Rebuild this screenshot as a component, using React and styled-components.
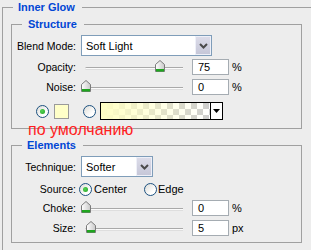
import React from "react";
import styled, { createGlobalStyle, css } from "styled-components";

const GlobalStyle = createGlobalStyle`
  html, body {
    margin: 0;
    padding: 0;
    background: #ededed;
    overflow: hidden;
  }
  body {
    font-family: "Liberation Sans", Arial, sans-serif;
    font-size: 10.5px;
    color: #000;
  }
`;

const Page = styled.div`
  position: relative;
  width: 311px;
  height: 250px;
  overflow: hidden;
`;

const Group = styled.fieldset`
  box-sizing: border-box;
  min-width: 0;
  margin: ${(p) => p.$margin || 0};
  padding: ${(p) => p.$padding || 0};
  width: ${(p) => p.$width || "auto"};
  border: 1px solid #a0a0a0;
  ${(p) =>
    p.$open &&
    css`
      border-right: none;
      border-bottom: none;
      min-height: 270px;
    `}
`;

const Legend = styled.legend`
  margin-left: 10px;
  padding: 0 7px 0 ${(p) => p.$pl || 5}px;
  line-height: 14px;
  font-size: 11px;
  font-weight: bold;
  color: #0046d5;
`;

const Row = styled.div`
  display: flex;
  align-items: center;
  height: ${(p) => p.$h}px;
  margin-top: ${(p) => p.$mt || 0}px;
  padding-left: ${(p) => p.$pl || 0}px;
`;

const Label = styled.span`
  flex: none;
  width: 64px;
  margin-right: 5px;
  text-align: right;
  white-space: nowrap;
`;

const SelectBox = styled.div`
  flex: none;
  box-sizing: border-box;
  display: flex;
  align-items: center;
  justify-content: space-between;
  width: ${(p) => p.$w}px;
  height: 21px;
  padding-left: 4px;
  border: 1px solid #7f9db9;
  background: #fff;
  font-size: 11px;
`;

const SelectButton = styled.span`
  box-sizing: border-box;
  display: flex;
  align-items: center;
  justify-content: center;
  width: 16px;
  height: 19px;
  border: 1px solid #eef0f8;
  background: linear-gradient(#dcdce9, #c6c7d8);
`;

const SliderBox = styled.div`
  position: relative;
  flex: none;
  width: 102px;
  height: 16px;
`;

const Track = styled.div`
  position: absolute;
  left: 4px;
  right: 0;
  top: 8px;
  height: 3px;
  box-sizing: border-box;
  border-top: 1px solid #a9a9a9;
  border-bottom: 1px solid #dedede;
  border-radius: 2px 0 0 2px;
  background: #fbfbfb;
`;

const ThumbIcon = styled.svg`
  position: absolute;
  top: 1px;
  left: ${(p) => p.$x}px;
`;

const NumField = styled.div`
  flex: none;
  box-sizing: border-box;
  width: 37px;
  height: 16px;
  margin-left: 9px;
  padding-left: 5px;
  border: 1px solid #a5acb2;
  background: #fff;
  line-height: 14px;
  font-size: 11px;
`;

const Unit = styled.span`
  margin-left: 3px;
  font-size: 11px;
`;

const Radio = styled.span`
  position: relative;
  flex: none;
  box-sizing: border-box;
  width: 13px;
  height: 13px;
  margin-left: ${(p) => p.$ml || 0}px;
  border: 1px solid #1c5180;
  border-radius: 50%;
  background: linear-gradient(135deg, #dcdcd7, #ffffff 70%);
  ${(p) =>
    p.$checked &&
    css`
      &::after {
        content: "";
        position: absolute;
        left: 3px;
        top: 3px;
        width: 5px;
        height: 5px;
        border-radius: 50%;
        background: radial-gradient(circle at 40% 40%, #55d455, #21a121);
      }
    `}
`;

const RadioText = styled.span`
  margin-left: ${(p) => p.$ml || 2}px;
  font-size: 11px;
`;

const Swatch = styled.span`
  flex: none;
  box-sizing: border-box;
  width: 15px;
  height: 15px;
  margin-left: 5px;
  border: 1px solid #9a9a9a;
  background: #ffffc8;
`;

const GradientBox = styled.div`
  flex: none;
  box-sizing: border-box;
  display: flex;
  width: 123px;
  height: 18px;
  margin-left: 4px;
  border: 1px solid #000;
`;

const GradientFill = styled.div`
  flex: 1;
  background-color: #fff;
  background-image: linear-gradient(to right, #ffffc4, rgba(255, 255, 196, 0)),
    linear-gradient(45deg, #cdcdcd 25%, transparent 25%, transparent 75%, #cdcdcd 75%),
    linear-gradient(45deg, #cdcdcd 25%, transparent 25%, transparent 75%, #cdcdcd 75%);
  background-size: 100% 100%, 12px 12px, 12px 12px;
  background-position: 0 0, 0 0, 6px 6px;
`;

const GradientArrow = styled.div`
  display: flex;
  align-items: center;
  justify-content: center;
  width: 11px;
  border-left: 1px solid #000;
  background: #fff;
`;

const Note = styled.div`
  position: absolute;
  left: 28px;
  top: 122px;
  font-size: 16px;
  line-height: 16px;
  color: #ff1e1e;
  white-space: nowrap;
`;

function Chevron() {
  return (
    <svg width="9" height="6" viewBox="0 0 9 6">
      <polyline points="1,1 4.5,4.5 8,1" fill="none" stroke="#4a4a4a" strokeWidth="2" />
    </svg>
  );
}

function Select({ width, value }) {
  return (
    <SelectBox $w={width}>
      <span>{value}</span>
      <SelectButton>
        <Chevron />
      </SelectButton>
    </SelectBox>
  );
}

function Slider({ value, max = 100 }) {
  const x = Math.round((value / max) * 98);
  return (
    <SliderBox>
      <Track />
      <ThumbIcon $x={x} width="10" height="12" viewBox="0 0 10 12">
        <defs>
          <linearGradient id="thumbFill" x1="0" y1="0" x2="1" y2="0">
            <stop offset="0" stopColor="#ffffff" />
            <stop offset="1" stopColor="#c9c9c9" />
          </linearGradient>
        </defs>
        <polygon points="0.5,4.5 5,0.5 9.5,4.5 9.5,11.5 0.5,11.5" fill="url(#thumbFill)" stroke="#7b7b7b" />
        <rect x="1" y="9" width="8" height="2.5" fill="#1fa51f" />
      </ThumbIcon>
    </SliderBox>
  );
}

function SliderRow({ label, value, unit, max, mt }) {
  return (
    <Row $h={16} $mt={mt}>
      <Label>{label}</Label>
      <Slider value={value} max={max} />
      <NumField>{value}</NumField>
      <Unit>{unit}</Unit>
    </Row>
  );
}

export default function App() {
  return (
    <Page>
      <GlobalStyle />
      <Group $open $margin="0 0 0 2px">
        <Legend>Inner Glow</Legend>

        <Group $margin="3px 0 0 8px" $padding="4px 0 8px 0" $width="291px">
          <Legend $pl={6}>Structure</Legend>
          <Row $h={21}>
            <Label>Blend Mode:</Label>
            <Select width={131} value="Soft Light" />
          </Row>
          <SliderRow label="Opacity:" value={75} unit="%" mt={3} />
          <SliderRow label="Noise:" value={0} unit="%" mt={4} />
          <Row $h={18} $mt={7} $pl={24}>
            <Radio $checked />
            <Swatch />
            <Radio $ml={14} />
            <GradientBox>
              <GradientFill />
              <GradientArrow>
                <svg width="7" height="4" viewBox="0 0 7 4">
                  <polygon points="0,0 7,0 3.5,4" fill="#000" />
                </svg>
              </GradientArrow>
            </GradientBox>
          </Row>
        </Group>

        <Group $margin="9px 0 0 8px" $padding="4px 0 6px 0" $width="291px">
          <Legend $pl={5}>Elements</Legend>
          <Row $h={21}>
            <Label>Technique:</Label>
            <Select width={72} value="Softer" />
          </Row>
          <Row $h={14} $mt={5}>
            <Label>Source:</Label>
            <Radio $checked $ml={-2} />
            <RadioText $ml={2}>Center</RadioText>
            <Radio $ml={17} />
            <RadioText $ml={1}>Edge</RadioText>
          </Row>
          <SliderRow label="Choke:" value={0} unit="%" mt={4} />
          <SliderRow label="Size:" value={5} unit="px" mt={4} />
        </Group>
      </Group>

      <Note>по умолчанию</Note>
    </Page>
  );
}
